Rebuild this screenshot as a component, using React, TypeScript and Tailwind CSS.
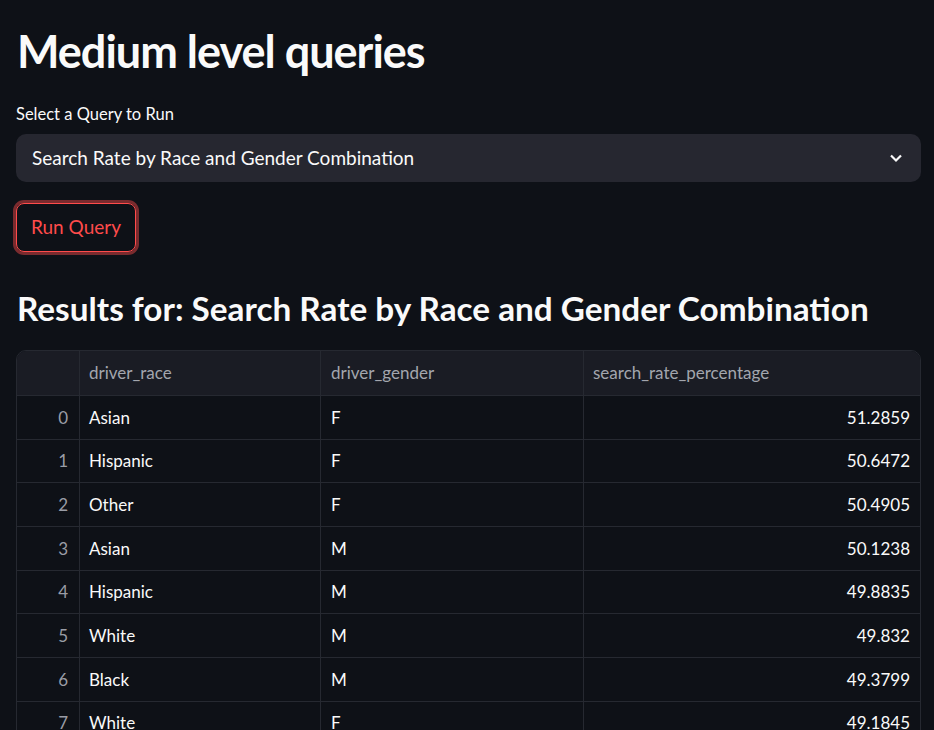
import React from "react";

const rows: [number, string, string, string][] = [
  [0, "Asian", "F", "51.2859"],
  [1, "Hispanic", "F", "50.6472"],
  [2, "Other", "F", "50.4905"],
  [3, "Asian", "M", "50.1238"],
  [4, "Hispanic", "M", "49.8835"],
  [5, "White", "M", "49.832"],
  [6, "Black", "M", "49.3799"],
  [7, "White", "F", "49.1845"],
  [8, "Other", "M", "48.9702"],
  [9, "Black", "F", "48.7531"],
];

export default function App() {
  return (
    <div
      className="h-[730px] w-full overflow-hidden bg-[#0e1117] text-[#fafafa] pl-4 pr-[13px]"
      style={{ fontFamily: "Lato, 'Noto Sans', sans-serif" }}
    >
      <h1 className="pt-[23px] text-[45px] font-bold leading-[56px] tracking-[-1px] pl-[1px]">
        Medium level queries
      </h1>
      <div className="mt-[24px] text-[16.5px] leading-[22px]">Select a Query to Run</div>
      <div className="mt-[9px] flex h-[48px] items-center justify-between rounded-[10px] bg-[#262730] pl-4 pr-[17px]">
        <span className="text-[19px]">Search Rate by Race and Gender Combination</span>
        <svg width="16" height="16" viewBox="0 0 16 16" fill="none">
          <path d="M3 5.5l5 5 5-5" stroke="#fafafa" strokeWidth="2.2" />
        </svg>
      </div>
      <div className="mt-[21px]">
        <button className="flex h-[49px] w-[120px] items-center justify-center rounded-[8px] border border-[#ff4b4b] text-[19px] text-[#ff4b4b] shadow-[0_0_0_3px_rgba(255,75,75,0.45)]">
          Run Query
        </button>
      </div>
      <h2 className="mt-[34px] text-[33.3px] font-bold leading-[44px] pl-[1px]">
        Results for: Search Rate by Race and Gender Combination
      </h2>
      <div className="mt-[20px] overflow-hidden rounded-[10px] border border-[#262931]">
        <div className="grid grid-cols-[63px_241px_263px_1fr] text-[17px]">
          <div className="h-[45px] border-b border-r border-[#262931] bg-[#1a1c24]" />
          <div className="flex h-[45px] items-center border-b border-r border-[#262931] bg-[#1a1c24] pl-[9px] text-[#a3a6ae]">
            driver_race
          </div>
          <div className="flex h-[45px] items-center border-b border-r border-[#262931] bg-[#1a1c24] pl-[10px] text-[#a3a6ae]">
            driver_gender
          </div>
          <div className="flex h-[45px] items-center border-b border-[#262931] bg-[#1a1c24] pl-[9px] text-[#a3a6ae]">
            search_rate_percentage
          </div>
          {rows.map(([i, race, g, v]) => (
            <React.Fragment key={i}>
              <div className="flex h-[43.7px] items-center justify-end border-b border-r border-[#262931] pr-[11px] text-[#9a9da6]">
                {i}
              </div>
              <div className="flex h-[43.7px] items-center border-b border-r border-[#262931] pl-[9px]">
                {race}
              </div>
              <div className="flex h-[43.7px] items-center border-b border-r border-[#262931] pl-[10px]">
                {g}
              </div>
              <div className="flex h-[43.7px] items-center justify-end border-b border-[#262931] pr-[10px]">
                {v}
              </div>
            </React.Fragment>
          ))}
        </div>
      </div>
    </div>
  );
}
